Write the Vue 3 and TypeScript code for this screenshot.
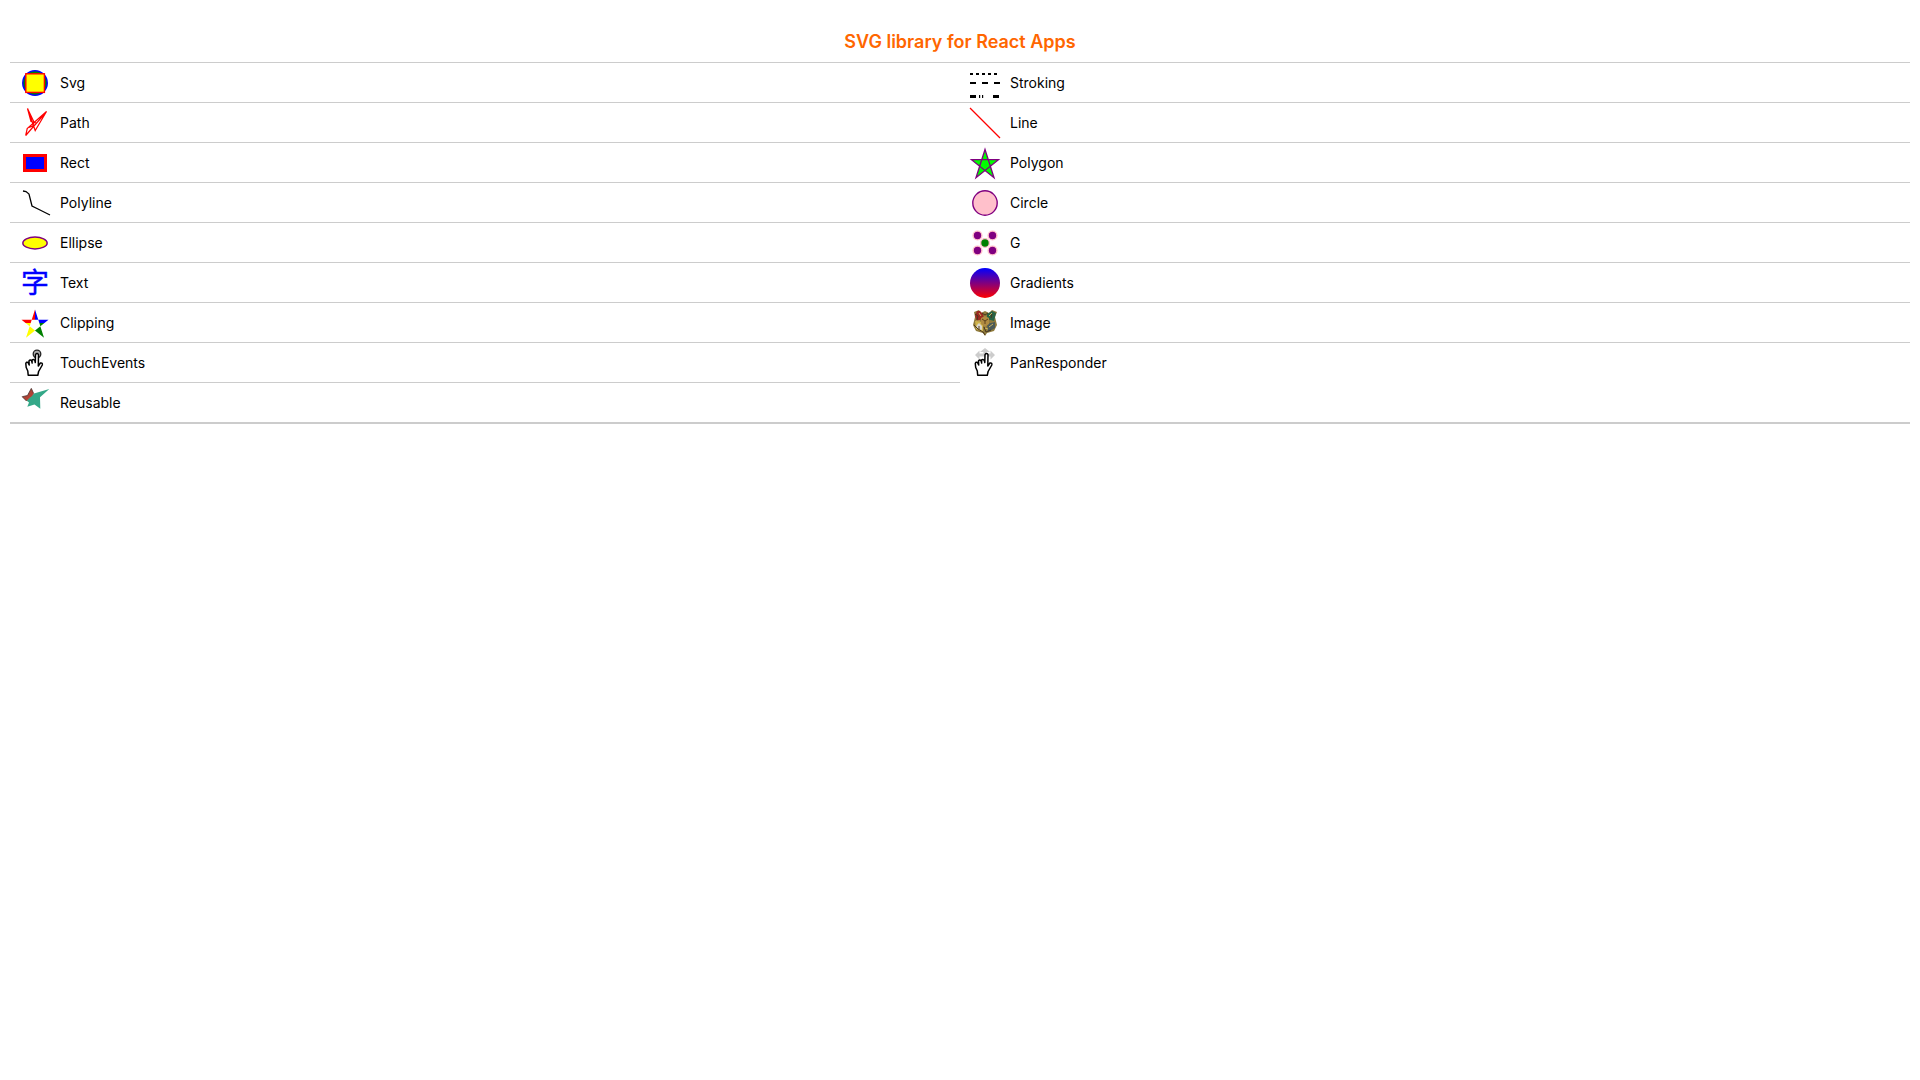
<script setup lang="ts">
interface Example {
  id: string
  label: string
}

const examples: Example[] = [
  { id: 'svg', label: 'Svg' },
  { id: 'stroking', label: 'Stroking' },
  { id: 'path', label: 'Path' },
  { id: 'line', label: 'Line' },
  { id: 'rect', label: 'Rect' },
  { id: 'polygon', label: 'Polygon' },
  { id: 'polyline', label: 'Polyline' },
  { id: 'circle', label: 'Circle' },
  { id: 'ellipse', label: 'Ellipse' },
  { id: 'g', label: 'G' },
  { id: 'text', label: 'Text' },
  { id: 'gradients', label: 'Gradients' },
  { id: 'clipping', label: 'Clipping' },
  { id: 'image', label: 'Image' },
  { id: 'touch', label: 'TouchEvents' },
  { id: 'pan', label: 'PanResponder' },
  { id: 'reusable', label: 'Reusable' },
]

const hand =
  'M8.2 27.3 L7.8 23 L6.2 19.5 L5.8 15.5 Q6.4 13.6 8 14.4 L9.2 17 L9 13 Q10.2 11.2 11.6 12.8 L12.2 15 L12 12 Q13.4 10.6 14.8 12.4 L15.3 14.5 L15.5 6.6 Q17 4.6 18.5 6.6 L18.3 18 L20.4 15 Q22.8 14.4 22.3 17 L18.6 23.5 L17.8 27.3 Z'
</script>

<template>
  <main class="page">
    <h1 class="title">SVG library for React Apps</h1>
    <ul class="list">
      <li v-for="item in examples" :key="item.id" class="item">
        <button type="button" class="link">
          <svg class="icon" viewBox="0 0 30 30" aria-hidden="true">
            <g v-if="item.id === 'svg'">
              <circle cx="15" cy="15" r="12.2" fill="green" stroke="blue" stroke-width="1.5" />
              <rect x="5.8" y="5.8" width="18.6" height="18.6" fill="yellow" stroke="red" stroke-width="1.4" />
            </g>
            <g v-else-if="item.id === 'stroking'" fill="none" stroke="black">
              <path d="M0 6H30" stroke-width="2" stroke-dasharray="3 3" />
              <path d="M0 15H30" stroke-width="2" stroke-dasharray="6 6" />
              <path d="M0 28.5H29" stroke-width="3" stroke-dasharray="6 3 1.2 1.8 1.2 9.8" />
            </g>
            <path
              v-else-if="item.id === 'path'"
              d="M7.5 .5L15.2 22.5L26.5 3.5L7.2 20.5L5.7 27.5L16.5 15L11 13.5ZM7.5 .5L14 14L12.5 19M26.5 3.5L15 17L9 19.5"
              fill="none"
              stroke="red"
              stroke-width="1.2"
            />
            <path v-else-if="item.id === 'line'" d="M0 0L30 30" stroke="red" stroke-width="1.2" />
            <rect
              v-else-if="item.id === 'rect'"
              x="4.5" y="7.5" width="21" height="15" fill="blue" stroke="red" stroke-width="3"
            />
            <polygon
              v-else-if="item.id === 'polygon'"
              points="15,1.5 6,29.7 28.5,11.7 1.5,11.7 24,29.7" fill="lime" stroke="purple" stroke-width="1.3"
            />
            <polyline
              v-else-if="item.id === 'polyline'"
              points="3,3 6,3.6 9,6 12,18 18,21 30,27" fill="none" stroke="black" stroke-width="1.3"
            />
            <circle
              v-else-if="item.id === 'circle'"
              cx="15" cy="15" r="12.2" fill="pink" stroke="purple" stroke-width="1.4"
            />
            <ellipse
              v-else-if="item.id === 'ellipse'"
              cx="15" cy="15" rx="12.2" ry="6" fill="yellow" stroke="purple" stroke-width="1.4"
            />
            <g v-else-if="item.id === 'g'" fill="purple" stroke="pink" stroke-width="1.4">
              <circle cx="7.5" cy="7.5" r="4.4" />
              <circle cx="22.5" cy="7.5" r="4.4" />
              <circle cx="7.5" cy="22.5" r="4.4" />
              <circle cx="22.5" cy="22.5" r="4.4" />
              <circle cx="15" cy="15" r="4.4" fill="green" />
            </g>
            <text
              v-else-if="item.id === 'text'"
              class="glyph" x="15" y="25" text-anchor="middle" fill="blue" stroke="blue" stroke-width=".4"
            >字</text>
            <g v-else-if="item.id === 'gradients'">
              <linearGradient id="blue-red" x1="0" y1="0" x2="0" y2="1">
                <stop offset="0" stop-color="blue" />
                <stop offset="1" stop-color="red" />
              </linearGradient>
              <circle cx="15" cy="15" r="15" fill="url(#blue-red)" />
            </g>
            <g v-else-if="item.id === 'clipping'">
              <clipPath id="star-clip">
                <polygon
                  points="15,1.5 6,29.7 28.5,11.7 1.5,11.7 24,29.7" clip-rule="evenodd"
                />
              </clipPath>
              <g clip-path="url(#star-clip)">
                <rect width="15" height="15" fill="red" />
                <rect x="15" width="15" height="15" fill="blue" />
                <rect y="15" width="15" height="15" fill="yellow" />
                <rect x="15" y="15" width="15" height="15" fill="green" />
              </g>
            </g>
            <g v-else-if="item.id === 'image'">
              <path d="M4 4L9 2L11 5L15 3L19 5L22 2L27 4L25 9L27 17L24 23L17 25L15 28L13 25L6 23L3 17L5 9Z" fill="#8f7a3c" />
              <path d="M7 3L10 3L13 6L14 10L7 13L5 8Z" fill="#9c2922" />
              <path d="M17 6L22 3L26 5L24 13L17 11Z" fill="#286345" />
              <path d="M5 13L13 14L13 24L6 21Z" fill="#d0b44b" />
              <path d="M7 17L9 15L12 18L12 22L6 20Z" fill="#d9d7ce" />
              <path d="M17 16L25 14L25 20L18 24Z" fill="#4c5a58" />
              <path d="M11 10L15 8L19 10L19 16L15 19L11 16Z" fill="#b08b42" />
              <path d="M5 6L8 8L7 12M12 5L15 7L18 5M22 6L21 10M14 19L16 24L21 22M4 17L8 21L13 24L15 27" fill="none" stroke="#49361e" />
              <path d="M9 5L11 8M19 8L22 5M6 13L10 13M19 19L23 16M15 20L18 21" stroke="#cdb45e" />
              <path d="M12 11L15 13L18 11M15 13V16M9 18L9 21" fill="none" stroke="#5d421e" />
            </g>
            <g v-else-if="item.id === 'touch'" stroke-linejoin="round">
              <circle cx="17" cy="6" r="3.8" fill="#aaa" stroke="#222" stroke-width="1.3" />
              <path :d="hand" fill="white" stroke="black" stroke-width="1.5" />
            </g>
            <g v-else-if="item.id === 'pan'" stroke-linejoin="round">
              <path
                d="M15 0L20 4H16.5V5.5H20.5V2.5L25 7L20.5 11.5V8.5H9.5V11.5L5 7L9.5 2.5V5.5H13.5V4H10Z"
                fill="#ccc"
              />
              <path :d="hand" transform="translate(-.5 0)" fill="white" stroke="black" stroke-width="1.5" />
            </g>
            <g v-else>
              <path d="M14 5.5L29.3 1L20 9.2L20.3 20.8L14.5 16.5L7.3 18.8L9 14.5L6.5 12.5Z" fill="#34a888" />
              <path d="M11.3 .4L13.7 5.6Q12.5 8.5 9.5 10L6.5 13L2.2 8.7L7.5 7.5Z" fill="#b04235" />
              <path d="M6.5 13L2.2 8.7L7.5 7.5L11.3 .4L13.7 5.6" fill="none" stroke="#482f2b" stroke-width=".8" />
            </g>
          </svg>
          <span class="label">{{ item.label }}</span>
        </button>
      </li>
    </ul>
  </main>
</template>

<style>
body {
  margin: 0;
  background: #fff;
}
</style>

<style scoped>
.page {
  padding: 20px 10px 0;
  font-family: Inter, "Liberation Sans", sans-serif;
  color: #000;
}

.title {
  margin: 0;
  padding: 11px 0 9px;
  font-size: 18px;
  line-height: 22px;
  font-weight: 600;
  text-align: center;
  color: #f60;
}

.list {
  display: grid;
  grid-template-columns: 1fr 1fr;
  margin: 0;
  padding: 0;
  list-style: none;
  border-bottom: 2px solid #ccc;
}

.item {
  border-top: 1px solid #ccc;
}

.link {
  display: flex;
  align-items: center;
  gap: 10px;
  width: 100%;
  padding: 5px 10px 4px;
  border: 0;
  background: none;
  color: inherit;
  font: inherit;
  font-size: 14px;
  line-height: 18px;
  text-align: left;
  cursor: pointer;
}

.label {
  padding-bottom: 1px;
}

.icon {
  flex: none;
  width: 30px;
  height: 30px;
  overflow: visible;
}

.glyph {
  font-family: "Noto Sans CJK SC", sans-serif;
  font-size: 28px;
}
</style>
